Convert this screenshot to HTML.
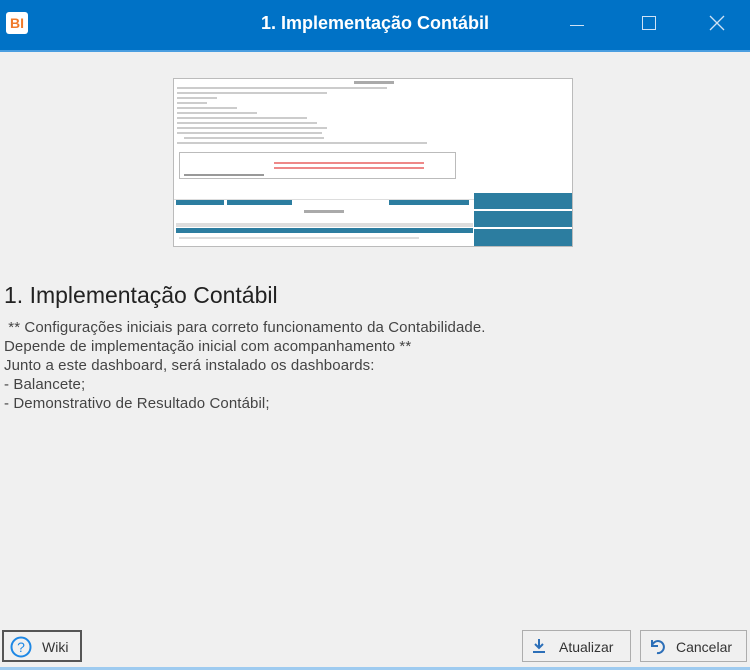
<!DOCTYPE html>
<html><head><meta charset="utf-8"><style>
body{margin:0;width:750px;height:670px;background:#f0f0f0;font-family:"Liberation Sans",sans-serif;position:relative;overflow:hidden}
.t{position:absolute;left:0;top:0;width:750px;height:50px;background:#0072c6;border-bottom:2px solid #4a9ee0}
.t .ti{position:absolute;left:0;width:750px;top:13px;text-align:center;color:#fff;font-size:18px;font-weight:bold}
.a{position:absolute}
.txt{position:absolute;left:4px;top:318px;font-size:15px;letter-spacing:0.1px;color:#444;line-height:19px}
.btn{position:absolute;top:630px;height:32px;border:1px solid #adadad;background:#f0f0f0;box-sizing:border-box;font-size:14px;color:#333}
.ln{position:absolute;height:2px;background:#ccc}
</style></head><body>
<div class="t"><div class="ti">1. Implementação Contábil</div>
<div class="a" style="left:6px;top:12px;width:22px;height:22px;background:#fff;border-radius:3px;color:#f07a2a;font-weight:bold;font-size:14px;text-align:center;line-height:22px">BI</div>
<div class="a" style="left:570px;top:25px;width:14px;height:1px;background:#cfe2f5"></div>
<div class="a" style="left:642px;top:16px;width:12px;height:12px;border:1px solid #cfe2f5"></div>
<svg class="a" style="left:709px;top:15px" width="16" height="16"><path d="M1 1L15 15M15 1L1 15" stroke="#cfe2f5" stroke-width="1.3"/></svg>
</div>
<div class="a" style="left:173px;top:78px;width:398px;height:167px;background:#fff;border:1px solid #bbb">
<div class="a" style="left:180px;top:2px;width:40px;height:3px;background:#aaa"></div>
<div class="ln" style="left:3px;top:8px;width:210px"></div>
<div class="ln" style="left:3px;top:13px;width:150px"></div>
<div class="ln" style="left:3px;top:18px;width:40px"></div>
<div class="ln" style="left:3px;top:23px;width:30px"></div>
<div class="ln" style="left:3px;top:28px;width:60px"></div>
<div class="ln" style="left:3px;top:33px;width:80px"></div>
<div class="ln" style="left:3px;top:38px;width:130px"></div>
<div class="ln" style="left:3px;top:43px;width:140px"></div>
<div class="ln" style="left:3px;top:48px;width:150px"></div>
<div class="ln" style="left:3px;top:53px;width:145px"></div>
<div class="ln" style="left:10px;top:58px;width:140px"></div>
<div class="ln" style="left:3px;top:63px;width:250px"></div>
<div class="a" style="left:5px;top:73px;width:275px;height:25px;border:1px solid #bbb"></div>
<div class="ln" style="left:100px;top:83px;width:150px;background:#e88"></div>
<div class="ln" style="left:100px;top:88px;width:150px;background:#e88"></div>
<div class="ln" style="left:10px;top:95px;width:80px;background:#999"></div>
<div class="a" style="left:0;top:120px;width:300px;height:1px;background:#ddd"></div>
<div class="a" style="left:2px;top:121px;width:48px;height:5px;background:#2c7da0"></div>
<div class="a" style="left:53px;top:121px;width:65px;height:5px;background:#2c7da0"></div>
<div class="a" style="left:215px;top:121px;width:80px;height:5px;background:#2c7da0"></div>
<div class="a" style="left:130px;top:131px;width:40px;height:3px;background:#aaa"></div>
<div class="a" style="left:2px;top:144px;width:297px;height:4px;background:#ddd"></div>
<div class="a" style="left:2px;top:149px;width:297px;height:5px;background:#2c7da0"></div>
<div class="ln" style="left:5px;top:158px;width:240px;background:#ddd"></div>
<div class="a" style="left:300px;top:114px;width:98px;height:16px;background:#2c7da0"></div>
<div class="a" style="left:300px;top:132px;width:98px;height:16px;background:#2c7da0"></div>
<div class="a" style="left:300px;top:150px;width:98px;height:17px;background:#2c7da0"></div>
</div>
<div class="a" style="left:4px;top:282px;font-size:23px;color:#222">1. Implementação Contábil</div>
<div class="txt">&nbsp;** Configurações iniciais para correto funcionamento da Contabilidade.<br>Depende de implementação inicial com acompanhamento **<br>Junto a este dashboard, será instalado os dashboards:<br>- Balancete;<br>- Demonstrativo de Resultado Contábil;</div>
<div class="btn" style="left:2px;width:80px;border:2px solid #555"><svg class="a" style="left:6px;top:4px" width="22" height="22" viewBox="0 0 22 22"><circle cx="11" cy="11" r="9.5" fill="none" stroke="#1e88e5" stroke-width="2"/><text x="11" y="16" text-anchor="middle" font-size="14" font-family="Liberation Sans" fill="#1e88e5">?</text></svg><span class="a" style="left:38px;top:7px">Wiki</span></div>
<div class="btn" style="left:522px;width:109px"><svg class="a" style="left:8px;top:7px" width="16" height="16"><path d="M8 1v9M4 6l4 4 4-4M2 14h12" stroke="#2c6fb8" stroke-width="2" fill="none"/></svg><span class="a" style="left:36px;top:8px">Atualizar</span></div>
<div class="btn" style="left:640px;width:107px"><svg class="a" style="left:7px;top:6px" width="18" height="18"><path d="M4 3v6h6M4 9a6 6 0 1 1 5 7" stroke="#2c6fb8" stroke-width="2" fill="none"/></svg><span class="a" style="left:35px;top:8px">Cancelar</span></div>
<div class="a" style="left:0;top:667px;width:750px;height:3px;background:#9ecbf0"></div>
</body></html>
